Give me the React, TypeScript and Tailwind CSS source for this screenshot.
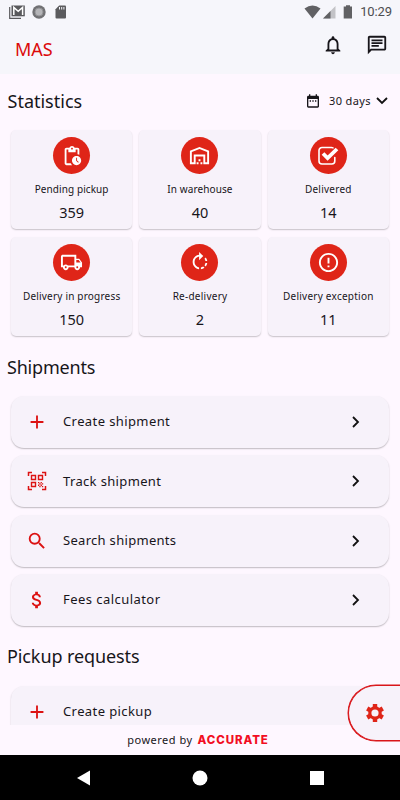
import React from 'react';
import {
  MdAdd,
  MdAttachMoney,
  MdDateRange,
  MdErrorOutline,
  MdNotificationsNone,
  MdOutlineChat,
  MdOutlineLocalShipping,
  MdOutlineWarehouse,
  MdPendingActions,
  MdRotateRight,
  MdSearch
} from 'react-icons/md';

interface IStat {
  label: string;
  value: number;
  icon: React.ReactNode;
  labelStyle: string;
}

interface IActionRow {
  label: string;
  icon: React.ReactNode;
  labelStyle: string;
}

const CheckIcon = () => (
  <svg width="24" height="24" viewBox="0 0 24 24" fill="none">
    <path
      d="M18.800 13.500V17a3 3 0 0 1-3 3H6a3 3 0 0 1-3-3V6.500a3 3 0 0 1 3-3h9.500q.8 0 1.500.4"
      stroke="white"
      strokeWidth="1.6"
      strokeLinecap="round"
    />
    <path d="M7 9.500l4.600 4.600L21 5" stroke="white" strokeWidth="3.800" />
  </svg>
);

const QrIcon = () => (
  <svg width="20" height="20" viewBox="0 0 20 20" fill="none" className="shrink-0">
    <path
      d="M1.500 5V1.500H5M15 1.500h3.500V5M18.500 15v3.500H15M5 18.500H1.500V15"
      stroke="currentColor"
      strokeWidth="1.500"
    />
    <path
      d="M4.500 4.500h4v4h-4zM11.500 4.500h4v4h-4zM4.500 11.500h4v4h-4z"
      stroke="currentColor"
      strokeWidth="1.400"
    />
    <path
      d="M11 11h1.300v1.300H11zM13.600 11h1.300v1.300h-1.300zM12.300 12.300h1.300v1.300h-1.300zM14.900 12.300h1.300v1.300h-1.300zM11 13.600h1.300v1.300H11zM13.600 13.600h1.300v1.300h-1.300zM12.300 14.900h1.300v1.300h-1.300zM14.900 14.900h1.300v1.300h-1.300z"
      fill="currentColor"
    />
  </svg>
);

const GearIcon = () => (
  <svg width="20" height="20" viewBox="-10 -10 20 20" fill="none">
    <circle r="5.200" stroke="currentColor" strokeWidth="3.200" />
    <path
      d="M0-5.500V-9M0 5.500V9M4.760-2.750L7.800-4.500M-4.760-2.750L-7.800-4.500M4.760 2.750L7.800 4.500M-4.760 2.750L-7.800 4.500"
      stroke="currentColor"
      strokeWidth="4.400"
    />
  </svg>
);

const stats: IStat[] = [
  {
    label: 'Pending pickup',
    value: 359,
    icon: <MdPendingActions size={22} />,
    labelStyle: 'tracking-[0.08px]'
  },
  {
    label: 'In warehouse',
    value: 40,
    icon: <MdOutlineWarehouse size={23} />,
    labelStyle: 'tracking-[0.1px]'
  },
  {
    label: 'Delivered',
    value: 14,
    icon: <CheckIcon />,
    labelStyle: 'tracking-[0.25px]'
  },
  {
    label: 'Delivery in progress',
    value: 150,
    icon: <MdOutlineLocalShipping size={23} />,
    labelStyle: 'tracking-[0.2px]'
  },
  {
    label: 'Re-delivery',
    value: 2,
    icon: <MdRotateRight size={22} />,
    labelStyle: 'tracking-[0.25px]'
  },
  {
    label: 'Delivery exception',
    value: 11,
    icon: <MdErrorOutline size={23} />,
    labelStyle: 'tracking-[0.25px]'
  }
];

const shipmentActions: IActionRow[] = [
  {
    label: 'Create shipment',
    icon: <MdAdd size={22} />,
    labelStyle: 'tracking-[0.4px]'
  },
  { label: 'Track shipment', icon: <QrIcon />, labelStyle: 'tracking-[0.35px]' },
  {
    label: 'Search shipments',
    icon: <MdSearch size={22} />,
    labelStyle: 'tracking-[0.3px]'
  },
  {
    label: 'Fees calculator',
    icon: <MdAttachMoney size={22} />,
    labelStyle: 'tracking-[0.45px]'
  }
];

const StatusBar = () => (
  <div className="flex h-6 items-center justify-between pl-[9px] pr-2 text-[#616164]">
    <div className="flex items-center">
      <svg width="17" height="14" viewBox="0 0 17 14" fill="none">
        <path d="M.700 2v11.300H12" stroke="#59595c" strokeWidth="1.200" />
        <path d="M2.500.5h13.300v10.800H2.500z" fill="#59595c" />
        <path d="M4.800 10V2.500l4.400 3.800 4.400-3.800V10" stroke="white" strokeWidth="1.500" />
      </svg>
      <svg width="14" height="14" viewBox="0 0 14 14" className="ml-[6px]">
        <circle cx="7" cy="7" r="6.700" fill="#717174" />
        <circle cx="7" cy="7" r="4" fill="#b5b5b8" stroke="#929295" />
      </svg>
      <svg width="12" height="14" viewBox="0 0 12 14" className="ml-[9px]">
        <path d="M4.200.5H10a1 1 0 0 1 1 1v11a1 1 0 0 1-1 1H1.500a1 1 0 0 1-1-1V4.200z" fill="#5b5b5e" />
        <path d="M4.500 2v2.500M6.700 2v2.500M8.900 2v2.500" stroke="#f6f6fb" strokeWidth="1" />
      </svg>
    </div>
    <div className="flex items-center">
      <svg width="17" height="14" viewBox="0 0 17 14">
        <path d="M.500 3.500Q8.500-2.500 16.500 3.500L8.500 13.500z" fill="currentColor" />
      </svg>
      <svg width="13" height="14" viewBox="0 0 13 14" className="ml-[2px]">
        <path d="M12.500 1v12.500H0z" fill="#c3c3c7" />
        <path d="M7.500 6v7.500H0z" fill="currentColor" />
      </svg>
      <svg width="10" height="14" viewBox="0 0 10 14" className="ml-[7px]">
        <path d="M3 .3h4v1.300h2v12H.700v-12H3z" fill="currentColor" />
      </svg>
      <span className="ml-[7px] font-[Roboto] text-[13px] leading-4 tracking-[-0.1px] text-[#4d4d50]">
        10:29
      </span>
    </div>
  </div>
);

const StatCard: React.FC<IStat> = ({ label, value, icon, labelStyle }) => (
  <div className="flex h-[99px] flex-col items-center rounded-[5px] bg-[#f7f2fa] pt-[7px] shadow-[0_1px_1.5px_rgba(0,0,0,0.22)]">
    <div className="flex size-[37px] items-center justify-center rounded-full bg-[#df2518] text-white">
      {icon}
    </div>
    <p className={`mt-[7px] whitespace-nowrap text-[10px] leading-4 ${labelStyle}`}>
      {label}
    </p>
    <p className="mt-[5px] text-[14.500px] leading-5">{value}</p>
  </div>
);

const ActionRow: React.FC<IActionRow> = ({ label, icon, labelStyle }) => (
  <div className="flex h-[52px] shrink-0 items-center rounded-[13px] bg-[#f7f2fa] pl-[15px] pr-[29px] shadow-[0_1px_1.5px_rgba(0,0,0,0.25)]">
    <div className="flex w-[22px] justify-center text-[#dc1212]">{icon}</div>
    <p className={`ml-[15px] flex-1 whitespace-nowrap text-[13px] ${labelStyle}`}>
      {label}
    </p>
    <svg width="8" height="12" viewBox="0 0 8 12" fill="none">
      <path d="M1 1l5 5-5 5" stroke="#111" strokeWidth="1.800" />
    </svg>
  </div>
);

export default function App() {
  return (
    <div className="relative flex h-[800px] w-[400px] flex-col overflow-hidden bg-[#fef7ff] font-['Noto_Sans',sans-serif] text-[#17151a]">
      <header className="h-[74px] shrink-0 bg-[#f6f6fb]">
        <StatusBar />
        <div className="flex items-start justify-between pl-[15px] pr-3">
          <h1 className="mt-[11px] text-[18px] leading-7 text-[#dc0a0a]">MAS</h1>
          <div className="mt-[10px] flex gap-[22px]">
            <MdNotificationsNone size={22} />
            <MdOutlineChat size={22} />
          </div>
        </div>
      </header>

      <main className="flex min-h-0 flex-1 flex-col overflow-hidden">
        <div className="mt-[15px] flex h-6 shrink-0 items-center justify-between pl-[7.500px] pr-3">
          <h2 className="text-[18px] leading-6">Statistics</h2>
          <button className="flex items-center">
            <MdDateRange size={16} />
            <span className="ml-2 text-[11px] tracking-[0.4px]">30 days</span>
            <svg width="12" height="8" viewBox="0 0 12 8" fill="none" className="ml-[5px]">
              <path d="M1 1l5 5 5-5" stroke="#111" strokeWidth="1.800" />
            </svg>
          </button>
        </div>
        <div className="mx-[11px] mt-[17px] grid shrink-0 grid-cols-3 gap-x-[7px] gap-y-[7.500px]">
          {stats.map(stat => (
            <StatCard key={stat.label} {...stat} />
          ))}
        </div>
        <h2 className="mt-[19px] pl-[7px] text-[18px] leading-6 tracking-[-0.2px]">
          Shipments
        </h2>
        <div className="mx-[11px] mt-[17.500px] flex shrink-0 flex-col gap-[7.300px]">
          {shipmentActions.map(action => (
            <ActionRow key={action.label} {...action} />
          ))}
        </div>
        <h2 className="mt-[18.500px] pl-[7px] text-[18px] leading-6 tracking-[-0.1px]">
          Pickup requests
        </h2>
        <div className="mx-[11px] mt-[17.500px] flex flex-col">
          <ActionRow
            label="Create pickup"
            icon={<MdAdd size={22} />}
            labelStyle="tracking-[0.4px]"
          />
        </div>
      </main>

      <footer className="flex h-[30px] shrink-0 items-center justify-center gap-[5px] pr-1">
        <span className="text-[11px] tracking-[0.5px]">powered by</span>
        <span className="relative mt-[2px] font-[Inter] text-[11.500px] font-extrabold tracking-[0.9px] text-[#f20d22]">
          ACCURATE
        </span>
      </footer>
      <nav className="flex h-[45px] shrink-0 items-center bg-black pl-[76px]">
        <svg width="248" height="16" viewBox="0 0 248 16" fill="white">
          <path d="M14 .5v15L1 8z" />
          <circle cx="124" cy="8" r="7.500" />
          <path d="M234 1h14v14h-14z" />
        </svg>
      </nav>

      <button className="absolute right-0 top-[685px] flex h-[56px] w-[52px] items-center rounded-l-full border-[1.500px] border-r-0 border-[#d9161a] bg-[#f7f2fa] pl-4 text-[#df2518] ring-[0.500px] ring-[#d9161a]">
        <GearIcon />
      </button>
    </div>
  );
}
